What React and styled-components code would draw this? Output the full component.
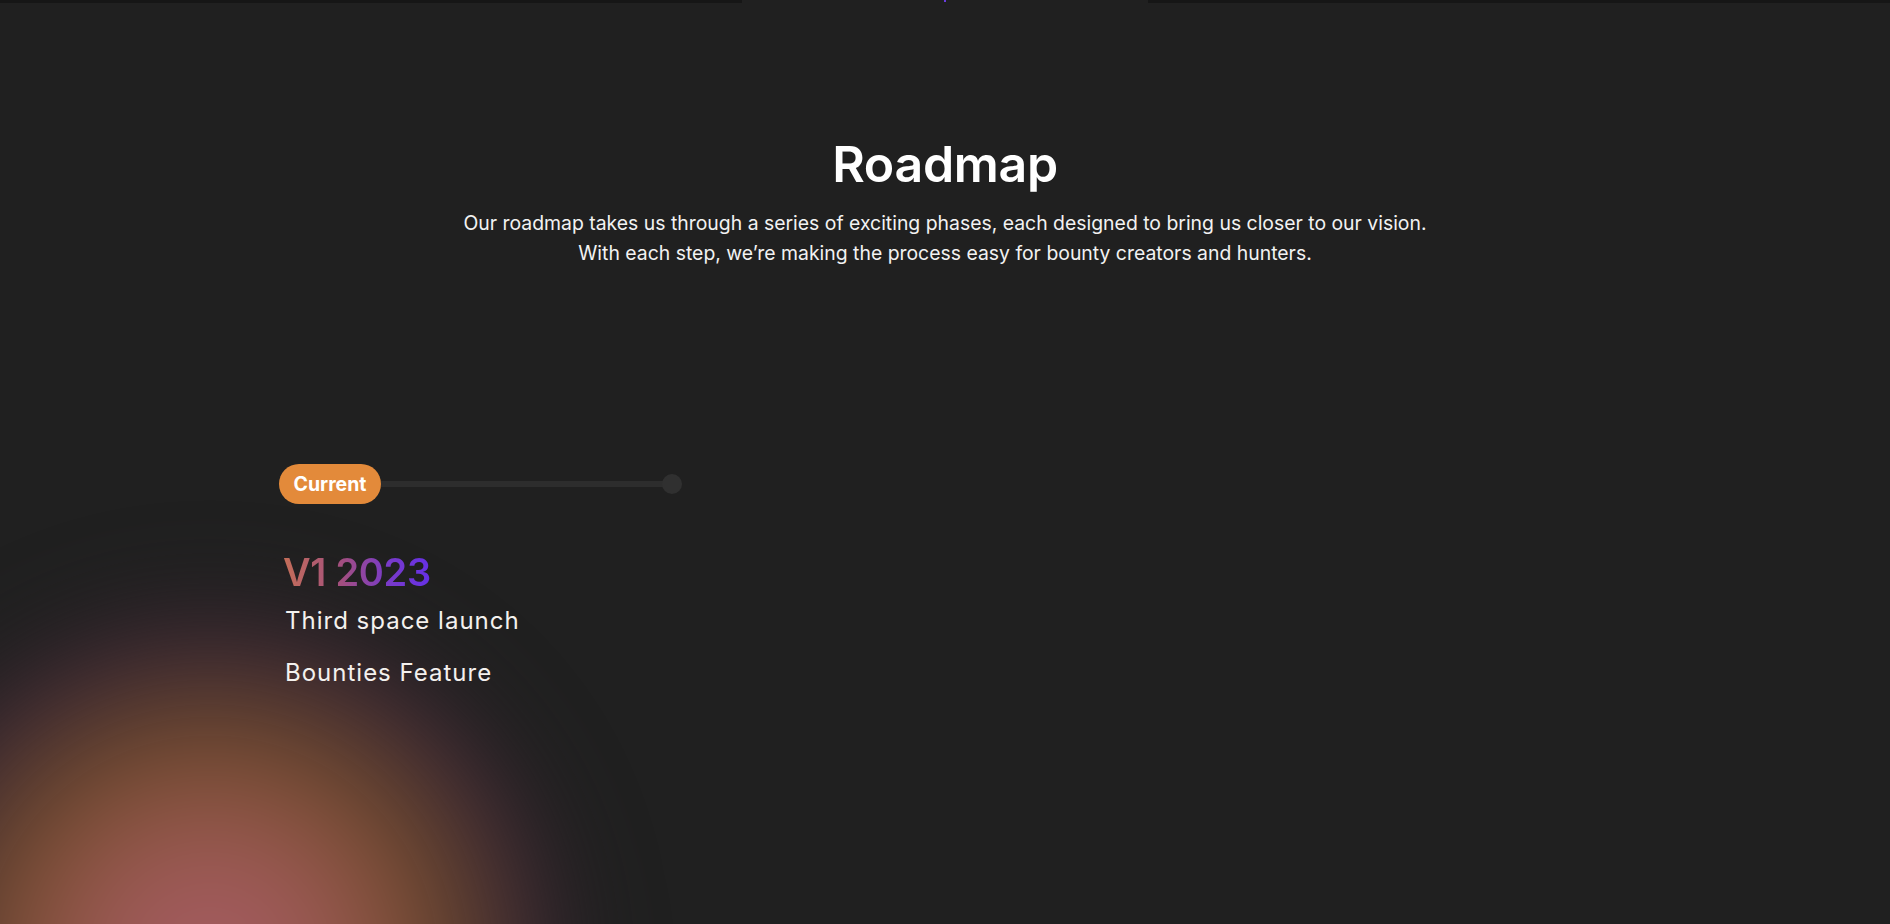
import React from "react";
import styled, { createGlobalStyle } from "styled-components";

const GlobalStyle = createGlobalStyle`
  html, body {
    margin: 0;
    padding: 0;
    background: #202020;
    overflow: hidden;
  }
  * {
    box-sizing: border-box;
  }
`;

const Page = styled.div`
  position: relative;
  width: 100%;
  height: 924px;
  background: #202020;
  overflow: hidden;
  font-family: Inter, "Open Sans", sans-serif;
  color: #ffffff;
`;

const TopStrip = styled.div`
  display: flex;
  justify-content: center;
  height: 3px;
  background: #161616;
`;

const StripGap = styled.div`
  position: relative;
  width: 406px;
  height: 100%;
  background: #202020;
`;

const StripDot = styled.span`
  position: absolute;
  left: 202px;
  top: 0;
  width: 2px;
  height: 2px;
  background: #6a3de0;
`;

const Glow = styled.div`
  position: absolute;
  left: -180px;
  bottom: -430px;
  width: 780px;
  height: 780px;
  background: radial-gradient(
    circle closest-side at 50% 50%,
    #a85c66 0%,
    #985850 30%,
    #7c4e36 50%,
    #5a3e2c 66%,
    rgba(78, 46, 62, 0.75) 80%,
    rgba(50, 36, 44, 0.4) 90%,
    rgba(32, 32, 32, 0) 100%
  );
  filter: blur(40px);
  pointer-events: none;
`;

const Header = styled.header`
  display: flex;
  flex-direction: column;
  align-items: center;
  padding-top: 131px;
`;

const Title = styled.h1`
  margin: 0;
  font-size: 50px;
  font-weight: 600;
  line-height: 60px;
  letter-spacing: -0.3px;
`;

const Subtitle = styled.p`
  margin: 14px 0 0;
  font-size: 19.4px;
  font-weight: 400;
  line-height: 30px;
  text-align: center;
  color: #f2f2f2;
`;

const Timeline = styled.section`
  position: relative;
  display: flex;
  flex-direction: column;
  align-items: flex-start;
  padding: 196px 0 0 279px;
`;

const Track = styled.div`
  display: flex;
  align-items: center;
  width: 403px;
`;

const Pill = styled.div`
  display: flex;
  align-items: center;
  justify-content: center;
  width: 102px;
  height: 40px;
  border-radius: 20px;
  background: #e38a3a;
  font-size: 19.5px;
  font-weight: 700;
  color: #ffffff;
  flex-shrink: 0;
`;

const Line = styled.div`
  flex: 1;
  height: 6px;
  margin-right: -2px;
  background: #2d2d2d;
`;

const Node = styled.div`
  width: 20px;
  height: 20px;
  border-radius: 50%;
  background: #303030;
  flex-shrink: 0;
`;

const Phase = styled.h2`
  margin: 45px 0 0 4px;
  font-size: 38px;
  font-weight: 600;
  line-height: 46px;
  letter-spacing: -0.3px;
  background: linear-gradient(90deg, #c46e58 0%, #a24e80 40%, #7a3bc8 70%, #6530e6 100%);
  -webkit-background-clip: text;
  background-clip: text;
  color: transparent;
`;

const Item = styled.p`
  margin: ${(p) => (p.$first ? "10px" : "20px")} 0 0 6px;
  font-size: 24px;
  font-weight: 400;
  line-height: 32px;
  letter-spacing: 1px;
  color: #f4f1ee;
`;

const items = ["Third space launch", "Bounties Feature"];

export default function App() {
  return (
    <Page>
      <GlobalStyle />
      <Glow />
      <TopStrip>
        <StripGap>
          <StripDot />
        </StripGap>
      </TopStrip>
      <Header>
        <Title>Roadmap</Title>
        <Subtitle>
          Our roadmap takes us through a series of exciting phases, each designed to bring us closer to our vision.
          <br />
          With each step, we’re making the process easy for bounty creators and hunters.
        </Subtitle>
      </Header>
      <Timeline>
        <Track>
          <Pill>Current</Pill>
          <Line />
          <Node />
        </Track>
        <Phase>V1 2023</Phase>
        {items.map((text, i) => (
          <Item key={text} $first={i === 0}>
            {text}
          </Item>
        ))}
      </Timeline>
    </Page>
  );
}
